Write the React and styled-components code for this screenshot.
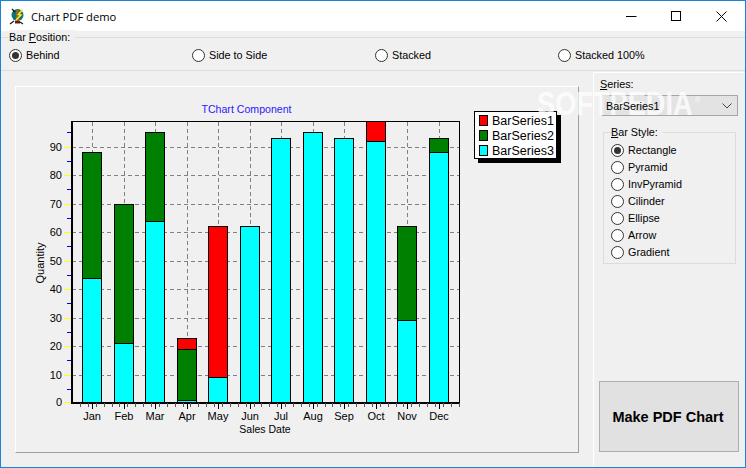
import React from 'react';
import styled, { createGlobalStyle } from 'styled-components';

const GlobalStyle = createGlobalStyle`
  html, body {
    margin: 0;
    padding: 0;
    background: #f0f0f0;
  }
`;

const months = ['Jan', 'Feb', 'Mar', 'Apr', 'May', 'Jun', 'Jul', 'Aug', 'Sep', 'Oct', 'Nov', 'Dec'];

// cumulative tops for each month: [cyan, green, red]
const bars = [
  [44, 88, 88],
  [21, 70, 70],
  [64, 95, 95],
  [1, 19, 23],
  [9, 9, 62],
  [62, 62, 62],
  [93, 93, 93],
  [95, 95, 95],
  [93, 93, 93],
  [92, 92, 100],
  [29, 62, 62],
  [88, 93, 93],
];

const positions = ['Behind', 'Side to Side', 'Stacked', 'Stacked 100%'];
const styles = ['Rectangle', 'Pyramid', 'InvPyramid', 'Cilinder', 'Ellipse', 'Arrow', 'Gradient'];

const Win = styled.div`
  width: 746px;
  height: 468px;
  box-sizing: border-box;
  border: 1px solid #1883d7;
  background: #f0f0f0;
  display: flex;
  flex-direction: column;
  position: relative;
  overflow: hidden;
  font-family: 'Liberation Sans', Arial, sans-serif;
  font-size: 10.8px;
  color: #000;
`;

const TitleBar = styled.div`
  height: 30px;
  flex: none;
  background: #fff;
  display: flex;
  align-items: center;
  padding: 0 1px 0 8px;
`;

const AppIcon = styled.svg`
  width: 17px;
  height: 17px;
  flex: none;
`;

const Title = styled.div`
  margin-left: 5px;
  font-family: 'Open Sans', 'Liberation Sans', sans-serif;
  font-size: 11.2px;
  flex: 1;
`;

const WinButton = styled.div`
  width: 45px;
  height: 30px;
  display: flex;
  align-items: center;
  justify-content: center;
`;

const PositionGroup = styled.div`
  position: relative;
  height: 32px;
  margin-top: 6px;
  flex: none;
  border-top: 1px solid #dcdcdc;
  border-bottom: 1px solid #dcdcdc;
  box-sizing: content-box;
`;

const GroupCaption = styled.div`
  position: absolute;
  top: -8px;
  left: ${({ $left }) => $left}px;
  padding: 0 5px 0 0;
  background: #f0f0f0;
  line-height: 14px;
`;

const PositionRow = styled.div`
  display: grid;
  grid-template-columns: repeat(4, 183px);
  padding: 11px 0 0 8px;
`;

const RadioItem = styled.div`
  display: flex;
  align-items: center;
  gap: 4px;
  height: 13px;
  line-height: 13px;
  white-space: nowrap;
`;

const RadioDot = styled.span`
  width: 13px;
  height: 13px;
  box-sizing: border-box;
  border: 1px solid #333;
  border-radius: 50%;
  background: #fff;
  flex: none;
  display: flex;
  align-items: center;
  justify-content: center;
  &::after {
    content: '';
    display: ${({ $on }) => ($on ? 'block' : 'none')};
    width: 7px;
    height: 7px;
    border-radius: 50%;
    background: #333;
  }
`;

const Content = styled.div`
  flex: 1;
  display: flex;
  min-height: 0;
  margin-top: 1px;
`;

const ChartArea = styled.div`
  width: 592px;
  flex: none;
  padding: 14px 14px 15px 14px;
  box-sizing: border-box;
`;

const ChartPanel = styled.div`
  width: 564px;
  height: 367px;
  box-sizing: border-box;
  border-top: 1px solid #fff;
  border-left: 1px solid #fff;
  border-right: 1px solid #a0a0a0;
  border-bottom: 1px solid #a0a0a0;
`;

const ChartSvg = styled.svg`
  display: block;
  width: 562px;
  height: 365px;
  font-family: 'Liberation Sans', Arial, sans-serif;
`;

const SidePanel = styled.div`
  flex: 1;
  display: flex;
  flex-direction: column;
  border-top: 1px solid #fff;
  border-left: 1px solid #fff;
  padding: 4px 6px 15px 6px;
`;

const FieldLabel = styled.div`
  line-height: 14px;
  position: relative;
  z-index: 1;
`;

const Combo = styled.div`
  width: 136px;
  height: 21px;
  box-sizing: border-box;
  margin: 4px 0 0 2px;
  border: 1px solid #a6a6a6;
  background: #e3e3e3;
  display: flex;
  align-items: center;
  justify-content: space-between;
  padding: 0 5px 0 3px;
`;

const ComboText = styled.span`
  position: relative;
  z-index: 1;
`;

const StyleGroup = styled.div`
  position: relative;
  margin: 16px 0 0 3px;
  width: 133px;
  height: 132px;
  box-sizing: border-box;
  border: 1px solid #dcdcdc;
  padding: 11px 0 0 7px;
  display: flex;
  flex-direction: column;
  gap: 4px;
`;

const MakeButton = styled.button`
  margin: auto 0 0 -1px;
  width: 140px;
  height: 71px;
  box-sizing: border-box;
  border: 1px solid #adadad;
  background: #e1e1e1;
  font-family: 'Liberation Sans', Arial, sans-serif;
  font-size: 14.5px;
  font-weight: 700;
  color: #000;
  padding: 0 2px 0 0;
`;

const Watermark = styled.div`
  position: absolute;
  left: 536px;
  top: 88px;
  font-size: 34px;
  font-weight: 700;
  line-height: 28px;
  color: rgba(255, 255, 255, 0.8);
  transform: scaleX(0.8);
  transform-origin: left center;
  pointer-events: none;
  white-space: nowrap;
`;

const Reg = styled.sup`
  font-size: 9px;
  font-weight: 400;
  margin-left: 3px;
  line-height: 0;
`;

const U = styled.span`
  text-decoration: underline;
`;

// svg is offset from page coords by (16, 87); helpers give pixel centres
const ox = 16;
const oy = 87;
const Y0 = 315.5;
const yOf = (v) => Math.floor(403.6 - v * 2.85) - oy + 0.5;
const xLeft = (i) => Math.floor(82.45 + i * 31.55) - ox + 0.5;
const xOf = (i) => xLeft(i) + 10;

const Chart = () => {
  const left = 56;
  const right = 443;
  const top = 34.5;
  const tens = [10, 20, 30, 40, 50, 60, 70, 80, 90];
  const fives = [5, 15, 25, 35, 45, 55, 65, 75, 85, 95];
  const minor = [];
  for (let x = left + 8; x < right; x += 7.89) minor.push(Math.round(x) + 0.5);
  return (
    <ChartSvg viewBox="0 0 562 365">
      <text x={230.5} y={26} textAnchor="middle" fontSize="10.6" fill="#2a1aff">TChart Component</text>

      <g shapeRendering="crispEdges">
        {tens.map((v) => (
          <line key={v} x1={left} x2={right} y1={yOf(v)} y2={yOf(v)} stroke="#808080" strokeDasharray="4 3" />
        ))}
        {months.map((m, i) => (
          <line key={m} x1={xOf(i)} x2={xOf(i)} y1={top} y2={Y0} stroke="#808080" strokeDasharray="4 3" />
        ))}

        {bars.map(([a, b, c], i) => {
          const x = xLeft(i);
          const clip = (v) => Math.max(yOf(v), top);
          return (
            <g key={i} stroke="#000" strokeWidth="1">
              {c > b && <rect x={x} y={clip(c)} width={19} height={yOf(b) - clip(c)} fill="#ff0000" />}
              {b > a && <rect x={x} y={clip(b)} width={19} height={yOf(a) - clip(b)} fill="#008000" />}
              <rect x={x} y={clip(a)} width={19} height={Y0 - clip(a)} fill="#00ffff" />
            </g>
          );
        })}

        <rect x={left} y={top} width={right - left} height={Y0 - top} fill="none" stroke="#000" />

        {fives.map((v) => (
          <line key={v} x1={left - 5} x2={left} y1={yOf(v)} y2={yOf(v)} stroke="#0000ff" />
        ))}
        {tens.map((v) => (
          <line key={v} x1={left - 8} x2={left} y1={yOf(v)} y2={yOf(v)} stroke="#ffff00" />
        ))}
        <line x1={left - 8} x2={left} y1={Y0} y2={Y0} stroke="#ffff00" />

        <line x1={left} x2={left} y1={top - 0.5} y2={Y0 + 1} stroke="#000" strokeWidth="2" />
        <line x1={left - 1} x2={right + 1} y1={Y0} y2={Y0} stroke="#000" strokeWidth="2" />

        {minor.map((x) => (
          <line key={x} x1={x} x2={x} y1={Y0} y2={Y0 + 4} stroke="#555" />
        ))}
        {months.map((m, i) => (
          <line key={m} x1={xOf(i)} x2={xOf(i)} y1={Y0} y2={Y0 + 6} stroke="#000" />
        ))}
      </g>

      {tens.map((v) => (
        <text key={v} x={left - 10} y={yOf(v) + 3.5} textAnchor="end" fontSize="11" fill="#000">{v}</text>
      ))}
      <text x={left - 10} y={Y0 + 3.5} textAnchor="end" fontSize="11" fill="#000">0</text>
      {months.map((m, i) => (
        <text key={m} x={xOf(i) - 0.5} y={Y0 + 17.5} textAnchor="middle" fontSize="11" fill="#000">{m}</text>
      ))}

      <text x={249} y={346} textAnchor="middle" fontSize="10.5" fill="#000">Sales Date</text>
      <text transform="translate(28 176) rotate(-90)" textAnchor="middle" fontSize="11" fill="#000">Quantity</text>

      <g shapeRendering="crispEdges">
        <rect x={462} y={28} width={83} height={48} fill="#000" />
        <rect x={458.5} y={24.5} width={82} height={47} fill="#fff" stroke="#000" />
        {[['#ff0000', 0], ['#008000', 15], ['#00ffff', 30]].map(([col, dy]) => (
          <rect key={col} x={463.5} y={28.5 + dy} width={8} height={10} fill={col} stroke="#000" />
        ))}
      </g>
      {['BarSeries1', 'BarSeries2', 'BarSeries3'].map((name, i) => (
        <text key={name} x={476} y={38 + i * 15} fontSize="12.5" fill="#000">{name}</text>
      ))}
    </ChartSvg>
  );
};

const App = () => (
  <>
    <GlobalStyle />
    <Win>
      <TitleBar>
        <AppIcon viewBox="0 0 17 17">
          <circle cx="8.5" cy="7" r="6" fill="#17706e" />
          <path d="M7 2h3v11H7z" fill="#8a6a24" />
          <path d="M6 13h5v2.5H6z" fill="#6b1a12" />
          <path d="M13.5 1.5 9.5 6.5l2.5.5-5 5" fill="none" stroke="#f6ea2a" strokeWidth="1.6" />
          <path d="M1 16l4-3M3 1l3 3M14 16l-3-2" stroke="#111" strokeWidth="1.1" />
        </AppIcon>
        <Title>Chart PDF demo</Title>
        <WinButton>
          <svg width="11" height="11" viewBox="0 0 11 11"><path d="M0 5.5h10.5" stroke="#000" /></svg>
        </WinButton>
        <WinButton>
          <svg width="11" height="11" viewBox="0 0 11 11"><rect x=".5" y=".5" width="9" height="9" fill="none" stroke="#000" /></svg>
        </WinButton>
        <WinButton>
          <svg width="11" height="11" viewBox="0 0 11 11"><path d="M.5.5l10 10M10.5.5l-10 10" stroke="#000" /></svg>
        </WinButton>
      </TitleBar>

      <PositionGroup>
        <GroupCaption $left={8}>Bar <U>P</U>osition:</GroupCaption>
        <PositionRow>
          {positions.map((p, i) => (
            <RadioItem key={p}>
              <RadioDot $on={i === 0} />
              {p}
            </RadioItem>
          ))}
        </PositionRow>
      </PositionGroup>

      <Content>
        <ChartArea>
          <ChartPanel>
            <Chart />
          </ChartPanel>
        </ChartArea>
        <SidePanel>
          <FieldLabel><U>S</U>eries:</FieldLabel>
          <Combo>
            <ComboText>BarSeries1</ComboText>
            <svg width="10" height="6" viewBox="0 0 10 6"><path d="M.5.5 5 5 9.5.5" fill="none" stroke="#444" /></svg>
          </Combo>
          <StyleGroup>
            <GroupCaption $left={7}><U>B</U>ar Style:</GroupCaption>
            {styles.map((s, i) => (
              <RadioItem key={s}>
                <RadioDot $on={i === 0} />
                {s}
              </RadioItem>
            ))}
          </StyleGroup>
          <MakeButton>Make PDF Chart</MakeButton>
        </SidePanel>
      </Content>

      <Watermark>SOFTPEDIA<Reg>®</Reg></Watermark>
    </Win>
  </>
);

export default App;
